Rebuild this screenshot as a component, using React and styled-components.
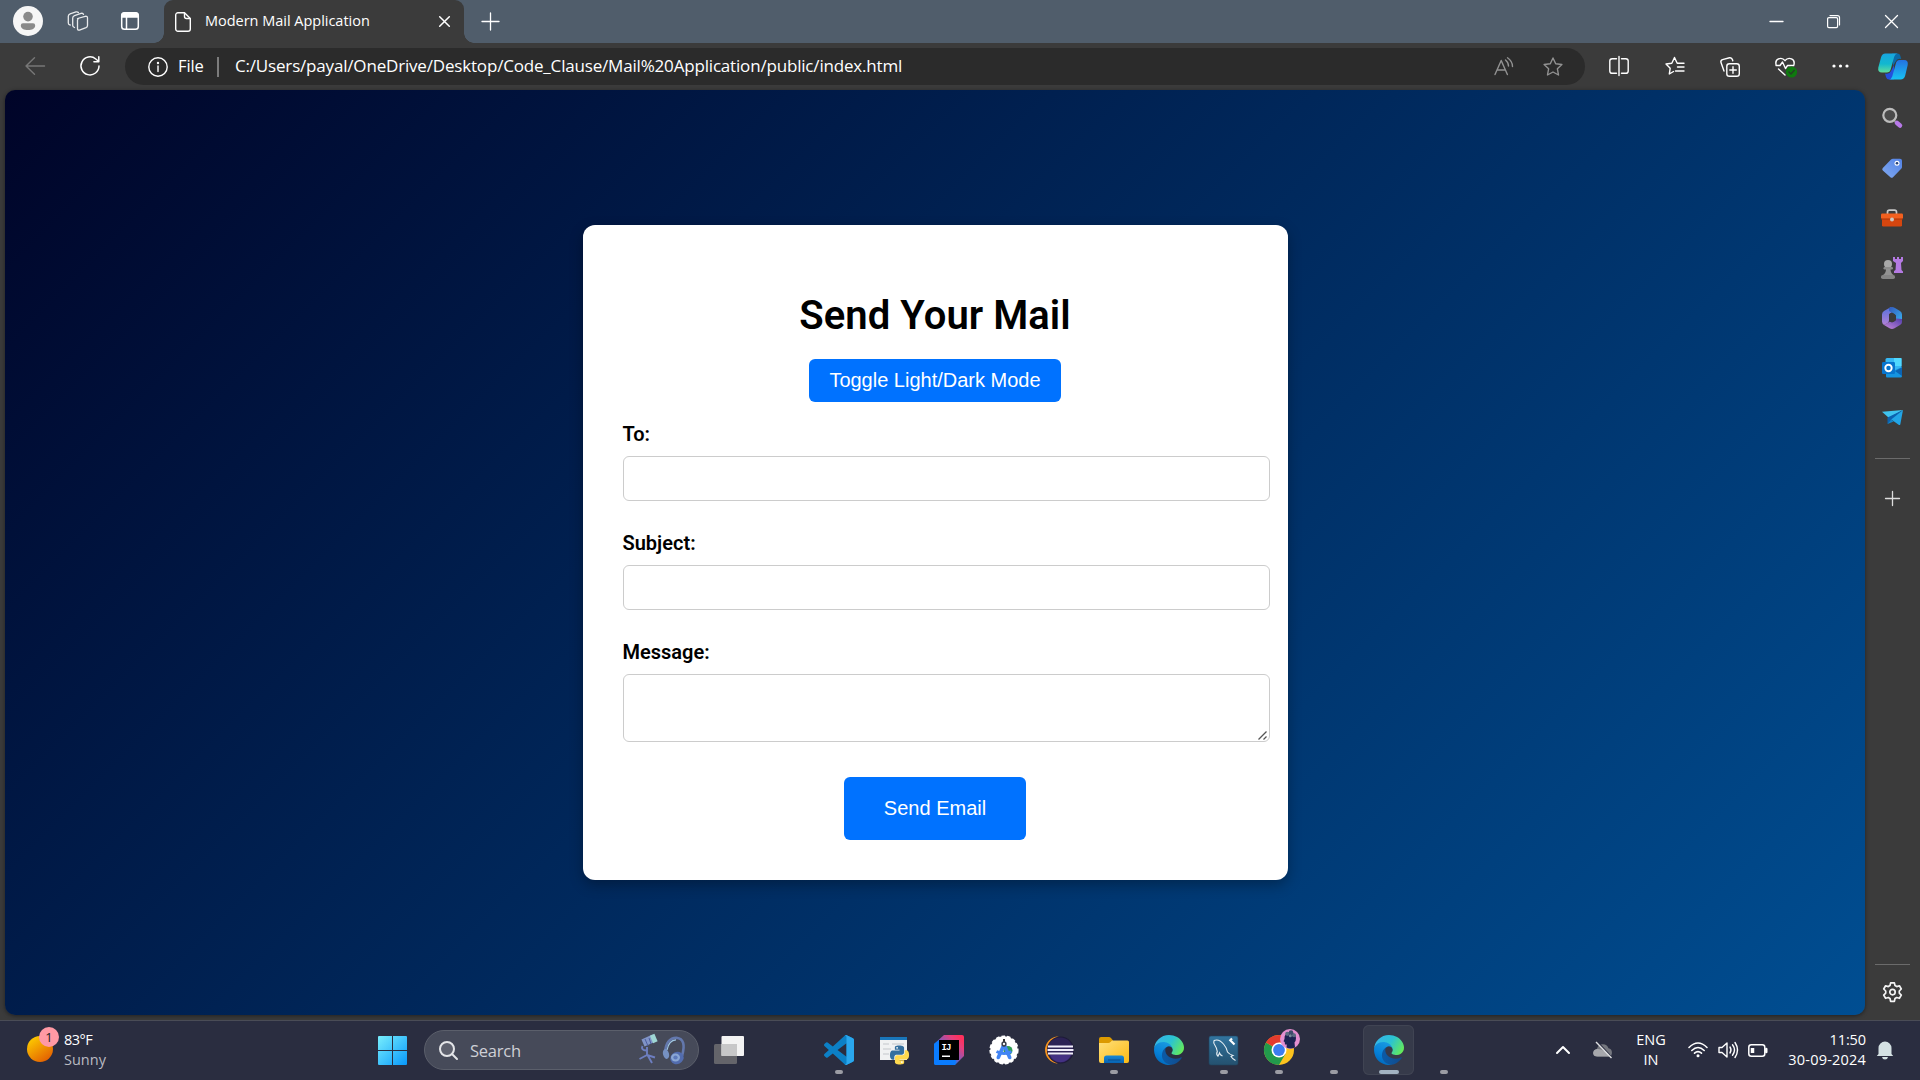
import React from 'react';
import styled, { createGlobalStyle } from 'styled-components';

const GlobalStyle = createGlobalStyle`
  * { box-sizing: border-box; }
  html, body { margin: 0; padding: 0; }
  body { background: #3b3b3b; overflow: hidden; }
  svg { display: block; flex: none; overflow: visible; }
`;

const uiFont = `'Open Sans', 'Noto Sans', sans-serif`;

const Desktop = styled.div`
  width: 1920px;
  height: 1080px;
  display: flex;
  flex-direction: column;
  background: #3b3b3b;
  font-family: ${uiFont};
  color: #fff;
`;

/* ---------- title bar ---------- */
const TitleBar = styled.header`
  height: 43px;
  flex: none;
  display: flex;
  background: #505d6b;
`;

const Cell = styled.div`
  width: ${(p) => p.$w}px;
  height: 100%;
  flex: none;
  display: flex;
  align-items: center;
  justify-content: center;
  padding-bottom: ${(p) => p.$lift || 0}px;
`;

const Tab = styled.div`
  position: relative;
  width: 300px;
  height: 43px;
  display: flex;
  align-items: center;
  padding: 0 14px 0 11px;
  border-radius: 9px 9px 0 0;
  background: #3b3b3b;
  &::before, &::after {
    content: '';
    position: absolute;
    bottom: 0;
    width: 10px;
    height: 10px;
  }
  &::before { left: -10px; background: radial-gradient(circle at 0 0, transparent 9.5px, #3b3b3b 10px); }
  &::after { right: -10px; background: radial-gradient(circle at 100% 0, transparent 9.5px, #3b3b3b 10px); }
`;

const TabTitle = styled.span`
  flex: 1;
  margin-left: 14px;
  padding-bottom: 2px;
  font-size: 14.5px;
  letter-spacing: ${(p) => p.$track}px;
  white-space: nowrap;
`;

const Spacer = styled.div`
  flex: 1;
`;

/* ---------- toolbar ---------- */
const Toolbar = styled.nav`
  height: 47px;
  flex: none;
  display: flex;
  align-items: center;
  padding-left: 7px;
`;

const AddressBar = styled.div`
  width: 1460px;
  height: 37px;
  margin-left: 8px;
  padding: 0 22px 0 23px;
  display: flex;
  align-items: center;
  border-radius: 19px;
  background: #2b2b2b;
`;

const Scheme = styled.span`
  width: 39px;
  margin-left: 10px;
  font-size: 16.5px;
  letter-spacing: -0.1px;
  padding-bottom: 2px;
`;

const Divider = styled.i`
  width: 2px;
  height: 20px;
  margin-right: 16px;
  background: #7c7c7c;
`;

const Url = styled.span`
  flex: 1;
  font-size: 17px;
  letter-spacing: -0.18px;
  white-space: nowrap;
  padding-bottom: 2px;
`;

const AddressActions = styled.div`
  display: flex;
  align-items: center;
  gap: 29px;
`;

/* ---------- body ---------- */
const Body = styled.div`
  height: 930px;
  flex: none;
  display: flex;
  padding: 0 0 5px 5px;
`;

const Page = styled.main`
  width: 1860px;
  height: 925px;
  display: flex;
  align-items: center;
  justify-content: center;
  border-radius: 10px;
  background: linear-gradient(135deg, #000428, #004e92);
  box-shadow: 0 1px 4px rgba(0, 0, 0, 0.45);
`;

const Card = styled.section`
  width: 705px;
  height: 655px;
  padding: 40px;
  display: flex;
  flex-direction: column;
  align-items: center;
  border-radius: 12px;
  background: #fff;
  color: #000;
  font-family: Roboto, sans-serif;
  box-shadow: 0 5px 14px rgba(0, 0, 0, 0.3);
`;

const Heading = styled.h1`
  margin: 27px 0 20px;
  font-size: 40px;
  line-height: 47px;
  font-weight: 600;
  letter-spacing: 0.06px;
`;

const ActionButton = styled.button`
  width: ${(p) => p.$w}px;
  height: ${(p) => p.$h}px;
  flex: none;
  padding: 0;
  border: 0;
  border-radius: 6px;
  background: #0072ff;
  color: #fff;
  font: 20px 'Liberation Sans', Arial, sans-serif;
`;

const Form = styled.form`
  width: 100%;
  display: flex;
  flex-direction: column;
  gap: 30px;
  margin: 20px 0 35px;
`;

const Field = styled.div`
  display: flex;
  flex-direction: column;
  gap: 10px;
`;

const Label = styled.label`
  font-size: 20px;
  line-height: 24px;
  font-weight: 600;
`;

const Input = styled.input`
  width: 647px;
  height: 45px;
  border: 1px solid #ccc;
  border-radius: 6px;
  background: #fff;
`;

const TextArea = styled.textarea`
  width: 647px;
  height: 68px;
  display: block;
  border: 1px solid #ccc;
  border-radius: 6px;
  background: #fff;
  resize: none;
`;

const MessageBox = styled.div`
  position: relative;
  height: 68px;
  width: 647px;
`;

const Grip = styled.svg`
  position: absolute;
  right: 3px;
  bottom: 2px;
`;

/* ---------- side rail ---------- */
const Rail = styled.aside`
  width: 55px;
  display: flex;
  flex-direction: column;
  align-items: center;
  padding: 3px 1px 0 0;
`;

const RailItem = styled.div`
  height: ${(p) => p.$h || 50}px;
  width: 100%;
  flex: none;
  display: flex;
  align-items: center;
  justify-content: center;
`;

const RailLine = styled.i`
  width: 35px;
  height: 1px;
  flex: none;
  background: #6b6b6b;
  margin: ${(p) => p.$m};
`;

/* ---------- taskbar ---------- */
const Taskbar = styled.footer`
  height: 60px;
  flex: none;
  display: flex;
  align-items: center;
  padding-bottom: 1px;
  background: #2a2d40;
  border-top: 1px solid #4a4c56;
`;

const Weather = styled.div`
  width: 378px;
  display: flex;
  align-items: center;
  padding-left: 27px;
`;

const WeatherIcon = styled.div`
  position: relative;
  width: 26px;
  height: 26px;
  margin-bottom: 2px;
  border-radius: 50%;
  background: linear-gradient(145deg, #fdcb00 10%, #e25d02 90%);
`;

const Badge = styled.span`
  position: absolute;
  left: 12px;
  top: -9px;
  width: 20px;
  height: 20px;
  border-radius: 50%;
  background: #ff99a4;
  color: #222;
  font-size: 13px;
  line-height: 20px;
  text-align: center;
`;

const TwoLines = styled.div`
  display: flex;
  flex-direction: column;
  font-size: 14.5px;
  line-height: 20px;
  text-align: ${(p) => p.$align || 'left'};
  width: ${(p) => p.$w}px;
  margin-left: ${(p) => p.$ml || 0}px;
  white-space: nowrap;
`;

const Line = styled.span`
  letter-spacing: ${(p) => p.$track || 0}px;
  color: ${(p) => (p.$dim ? '#b9bbc2' : '#fff')};
`;

const SearchBox = styled.div`
  width: 275px;
  height: 40px;
  margin: 0 15px 0 17px;
  padding: 0 12px 0 14px;
  display: flex;
  align-items: center;
  border: 1px solid #5b5f6b;
  border-radius: 20px;
  background: #464a59;
`;

const SearchText = styled.span`
  flex: 1;
  margin-left: 12px;
  font-size: 16.5px;
  letter-spacing: -0.25px;
  color: #ced0d6;
`;

const Apps = styled.div`
  display: flex;
  margin-left: 67px;
`;

const AppSlot = styled.div`
  position: relative;
  width: 51px;
  height: 50px;
  margin: 0 2px;
  display: flex;
  align-items: center;
  justify-content: center;
  border-radius: 6px;
  background: ${(p) => (p.$active ? '#363a4a' : 'transparent')};
  box-shadow: ${(p) => (p.$active ? 'inset 0 0 0 1px #404453' : 'none')};
`;

const Indicator = styled.i`
  position: absolute;
  bottom: 1px;
  left: 50%;
  width: ${(p) => (p.$active ? 20 : 8)}px;
  height: 4px;
  transform: translateX(-50%);
  border-radius: 2px;
  background: ${(p) => (p.$active ? '#a3b3c2' : '#9b9ca4')};
`;

const Raised = styled.div`
  padding: 0 0 6px 6px;
`;

/* ---------- drawings ---------- */
const Icon = ({ w = 20, h, box, sw = 1.4, color = '#fff', children }) => (
  <svg width={w} height={h || w} viewBox={box || `0 0 ${w} ${h || w}`} fill="none" stroke={color}
    strokeWidth={sw} strokeLinecap="round" strokeLinejoin="round">{children}</svg>
);

const Profile = () => (
  <svg width="30" height="30"><circle cx="15" cy="15" r="15" fill="#f6f6f6" />
    <circle cx="15" cy="10.600" r="4.800" fill="#8a8a8a" />
    <path d="M10 17.300h10a2.200 2.200 0 0 1 2.200 2.200c0 3.200-3.200 4.600-7.200 4.600s-7.200-1.400-7.200-4.600a2.200 2.200 0 0 1 2.200-2.200z" fill="#8a8a8a" /></svg>
);

const Workspaces = () => (
  <Icon w={22} h={20} sw={1.300} color="#e8eaec">
    <path d="M10.500 7.500l7.700-2.200q2.300-.4 2.300 1.700v7.500q0 1.600-1.500 2.200l-6.500 2.400q-2 .5-2-1.600V9q0-1.200 1.200-1.700" />
    <path d="M7.500 16.500q-1.800-.6-1.800-2V7q0-1.800 1.800-2.400L14 2.400q2-.5 2.500 1" />
    <path d="M3.200 14q-1.900-.4-1.900-2V5.300q0-1.800 1.800-2.400L9 .9q1.500-.4 2.400.6" />
  </Icon>
);

const TabActions = () => (
  <Icon w={18} sw={1.500}><rect x=".7" y=".7" width="16.600" height="16.600" rx="2.800" />
    <path d="M1 3.500Q1 1 3.500 1h11Q17 1 17 3.500V5H1z" fill="#fff" /><path d="M5.500 5v12" /></Icon>
);

const PageIcon = () => (
  <Icon w={16} h={20}><path d="M3 .7h6.500L15.300 6.500V17a2.300 2.300 0 0 1-2.300 2.300H3A2.300 2.300 0 0 1 .7 17V3A2.300 2.300 0 0 1 3 .7z" /><path d="M9.500 1v3.500a2 2 0 0 0 2 2H15" /></Icon>
);

const starPath = 'M10 1l2.700 5.700 6.200.8-4.500 4.300 1.100 6.200L10 15l-5.500 3 1.100-6.200L1.100 7.500l6.200-.8z';

const Copilot = () => (
  <svg width="30" height="27" viewBox="0 0 30 27">
    <defs>
      <linearGradient id="cpA" x1="0" y1="0" x2="0" y2="1"><stop offset="0" stopColor="#18a5e0" /><stop offset=".55" stopColor="#12b8cf" /><stop offset="1" stopColor="#62dd9b" /></linearGradient>
      <linearGradient id="cpB" x1="0" y1="0" x2="0" y2="1"><stop offset="0" stopColor="#2471e2" /><stop offset="1" stopColor="#18c2f2" /></linearGradient>
    </defs>
    <path d="M14 .5h5.500q2.300 0 2.800 2.200l.9 3.300q-4.200-.8-5.500 2.500L15 13z" fill="#0b6aa8" />
    <path d="M16 26.500h-5q-2.300 0-3-2.500l-1-3.500q4.500 1 6-2.500L16 12z" fill="#2450dc" />
    <path d="M7.500.5h12q-2.500.5-3.300 3.200L12.800 16q-.8 3.500-4 3.500H4Q-.5 19.500.3 14.500L3 4.500Q4 .5 7.500.5z" fill="url(#cpA)" />
    <path d="M21.500 7H26q4.500 0 3.700 5l-2.500 10.500q-1 4-4.700 4H11q2.500-.5 3.200-3l3.500-12.500Q18.500 7 21.500 7z" fill="url(#cpB)" />
  </svg>
);

const EdgeLogo = ({ id }) => (
  <svg width="30" height="30" viewBox="0 0 256 256">
    <defs>
      <linearGradient id={`${id}a`} x1=".2" y1=".5" x2="1" y2=".5"><stop offset="0" stopColor="#0c59a4" /><stop offset="1" stopColor="#114a8b" /></linearGradient>
      <linearGradient id={`${id}b`} x1=".7" y1="0" x2=".3" y2="1"><stop offset="0" stopColor="#1b9de2" /><stop offset=".6" stopColor="#0680d7" /><stop offset="1" stopColor="#0067ba" /></linearGradient>
      <linearGradient id={`${id}c`} x1="0" y1=".3" x2="1" y2=".7"><stop offset="0" stopColor="#35b5ea" /><stop offset=".5" stopColor="#2bc3d2" /><stop offset="1" stopColor="#66eb56" /></linearGradient>
    </defs>
    <path fill={`url(#${id}a)`} d="M231 190.500c-3.400 1.800-6.900 3.400-10.500 4.700a101.500 101.500 0 0 1-35.900 6.400c-47.300 0-88.500-32.500-88.500-74.300.1-11.400 6.400-21.900 16.400-27.300-42.800 1.800-53.800 46.400-53.800 72.500 0 74 68.100 81.400 82.800 81.400 7.900 0 19.800-2.300 27-4.600l1.300-.4a128.300 128.300 0 0 0 66.600-52.800 4 4 0 0 0-5.400-5.600z" />
    <path fill={`url(#${id}b)`} d="M105.700 241.500a79.200 79.200 0 0 1-22.700-21.300 80.700 80.700 0 0 1 29.500-120c3.200-1.500 8.500-4.100 15.600-4a32.400 32.400 0 0 1 25.700 13 31.900 31.900 0 0 1 6.300 18.700c0-.2 24.500-79.600-80-79.600-43.900 0-80 41.600-80 78.200a130.200 130.200 0 0 0 12.100 56 128 128 0 0 0 156.400 67 75.500 75.500 0 0 1-62.800-8z" />
    <path fill={`url(#${id}c)`} d="M152.300 148.900c-.8 1-3.300 2.500-3.300 5.600 0 2.600 1.700 5.100 4.700 7.300 14.400 10 41.500 8.700 41.600 8.700a59.600 59.600 0 0 0 30.300-8.400 61.400 61.400 0 0 0 30.400-52.900c.3-22.400-8-37.300-11.300-43.900C223.500 23.900 177.700 0 128 0A128 128 0 0 0 0 126.200c.5-36.500 36.800-66 80-66 3.500 0 23.500.3 42 10a72.600 72.600 0 0 1 30.900 29.300c6.100 10.600 7.200 24.100 7.200 29.500s-2.700 13.300-7.800 19.900z" />
  </svg>
);

const VSCode = () => (
  <svg width="30" height="30" viewBox="0 0 24 24">
    <path fill="#0c80c6" fillRule="evenodd" d="M23.150 2.587L18.210.21a1.494 1.494 0 0 0-1.705.29l-9.460 8.630-4.120-3.128a.999.999 0 0 0-1.276.057L.327 7.261A1 1 0 0 0 .326 8.740L3.899 12 .326 15.260a1 1 0 0 0 .001 1.479L1.650 17.940a.999.999 0 0 0 1.276.057l4.120-3.128 9.460 8.630a1.492 1.492 0 0 0 1.704.29l4.942-2.377A1.500 1.500 0 0 0 24 20.060V3.939a1.500 1.500 0 0 0-.85-1.352zm-5.146 14.861L10.826 12l7.178-5.448v10.896z" />
    <path fill="#2aa7ee" d="M18.210.21l4.940 2.377A1.500 1.500 0 0 1 24 3.940v16.120a1.500 1.500 0 0 1-.85 1.352l-4.940 2.377q-1 .4-1.750-.3 1.540.5 1.540-1.200V1.700q0-1.600-1.500-1.200.8-.7 1.710-.29z" />
  </svg>
);

const PythonApp = () => (
  <svg width="30" height="30" viewBox="0 0 30 30">
    <rect x="1" y="3" width="27" height="22" fill="#f0f1f2" /><rect x="1" y="2" width="27" height="3" fill="#1976ba" />
    <path d="M4 9h6M4 14h8M4 19h6M13 9h12" stroke="#c3c6cb" strokeWidth="1" />
    <g transform="translate(11 10.500) scale(.79)">
      <path fill="#346f9f" d="M14.250.18l.9.2.73.26.59.3.45.32.34.34.25.34.16.33.1.3.04.26.02.2-.01.13V8.500l-.05.63-.13.55-.21.46-.26.38-.3.31-.33.25-.35.19-.35.14-.33.1-.3.07-.26.04-.21.02H8.770l-.69.05-.59.14-.5.22-.41.27-.33.32-.27.35-.2.36-.15.37-.1.35-.07.32-.04.27-.02.21v3.060H3.170l-.21-.03-.28-.07-.32-.12-.35-.18-.36-.26-.36-.36-.35-.46-.32-.59-.28-.73-.21-.88-.14-1.050-.05-1.230.06-1.220.16-1.040.24-.87.32-.71.36-.57.4-.44.42-.33.42-.24.4-.16.36-.1.32-.05.24-.01h.16l.06.01h8.160v-.83H6.180l-.01-2.750-.02-.37.05-.34.11-.31.17-.28.25-.26.31-.23.38-.2.44-.18.51-.15.58-.12.64-.1.71-.06.77-.04.84-.02 1.270.05z" />
      <path fill="#ffd94f" d="M21.100 6.110l.28.06.32.12.35.18.36.27.36.35.35.47.32.59.28.73.21.88.14 1.040.05 1.230-.06 1.230-.16 1.040-.24.86-.32.71-.36.57-.4.45-.42.33-.42.24-.4.16-.36.09-.32.05-.24.02-.16-.01h-8.220v.82h5.840l.01 2.760.02.36-.05.34-.11.31-.17.29-.25.25-.31.24-.38.2-.44.17-.51.15-.58.13-.64.09-.71.07-.77.04-.84.01-1.270-.04-1.070-.14-.9-.2-.73-.25-.59-.3-.45-.33-.34-.34-.25-.34-.16-.33-.1-.3-.04-.25-.02-.2.01-.13v-5.340l.05-.64.13-.54.21-.46.26-.38.3-.32.33-.24.35-.2.35-.14.33-.1.3-.06.26-.04.21-.02.13-.01h5.840l.69-.05.59-.14.5-.21.41-.28.33-.32.27-.35.2-.36.15-.36.1-.35.07-.32.04-.28.02-.21V6.070h2.090l.14.01z" />
      <circle cx="9" cy="3" r="1.100" fill="#fff" /><circle cx="15" cy="21" r="1.100" fill="#fff" />
    </g>
  </svg>
);

const IntelliJ = () => (
  <svg width="30" height="30" viewBox="0 0 30 30">
    <defs><linearGradient id="ijA" x1="0" y1="1" x2="1" y2="0"><stop offset=".35" stopColor="#087cfa" /><stop offset=".52" stopColor="#8b58b4" /><stop offset=".75" stopColor="#e63e7c" /><stop offset=".9" stopColor="#fe315d" /></linearGradient></defs>
    <path d="M10 0h18q2 0 2 2v19l-9 9H2q-2 0-2-2V9z" fill="url(#ijA)" />
    <path d="M0 9l5-4v20h17l-1 5H2q-2 0-2-2z" fill="#0a7cff" />
    <rect x="5" y="5" width="20" height="20" fill="#000" />
    <text x="7.500" y="14.500" fontFamily="Liberation Mono, monospace" fontWeight="700" fontSize="9" fill="#fff" textLength="10">IJ</text>
    <rect x="8" y="20.500" width="8" height="1.500" fill="#fff" />
  </svg>
);

const AndroidStudio = () => (
  <svg width="30" height="30" viewBox="0 0 30 30">
    <circle cx="15" cy="15" r="13.700" fill="#fff" /><circle cx="15" cy="15" r="13.700" fill="none" stroke="#fff" strokeWidth="1.800" strokeDasharray="3.600 2" />
    <circle cx="19" cy="15.500" r="4.500" fill="#2f9c55" />
    <path d="M14.800 10L9.300 22.500M15.200 10l5.500 12.500" stroke="#4285f4" strokeWidth="3.600" strokeLinecap="round" />
    <path d="M7.500 16.500q7.500 4 15 0" stroke="#4285f4" strokeWidth="2.800" fill="none" />
    <path d="M15 4v3" stroke="#333" strokeWidth="2" /><circle cx="15" cy="9" r="1.900" fill="#fff" stroke="#3b3f4a" strokeWidth="1.500" />
  </svg>
);

const Eclipse = () => (
  <svg width="30" height="30" viewBox="0 0 30 30">
    <path d="M13 1.500A13.600 13.600 0 0 0 13 28.500L15 27V2z" fill="#f7941e" />
    <circle cx="16.500" cy="15" r="13.500" fill="#1e1b38" /><circle cx="16.300" cy="15" r="12.600" fill="#2c2255" />
    <path d="M6 20h21q-3 7-10.500 7.300Q9 27 6 20z" fill="#443183" />
    <path d="M4 11.500h25M3.500 15h26M4 18.500h25" stroke="#f1eefb" strokeWidth="1.900" />
  </svg>
);

const Folder = () => (
  <svg width="30" height="28" viewBox="0 0 30 28">
    <defs><linearGradient id="fdA" x1="0" y1="0" x2="1" y2="1"><stop offset="0" stopColor="#ffe07b" /><stop offset="1" stopColor="#fbba14" /></linearGradient>
      <linearGradient id="fdB" x1="0" y1="0" x2="0" y2="1"><stop offset="0" stopColor="#1788d6" /><stop offset="1" stopColor="#0763b3" /></linearGradient></defs>
    <path d="M0 3q0-2 2-2h8q1 0 2 1l2 2.500-3 4H0z" fill="#dc9a00" />
    <path d="M0 7h9.500q1 0 2-1L13 4.500h15.500q1.500 0 1.500 1.500v19q0 2-2 2H2q-2 0-2-2z" fill="url(#fdA)" />
    <path d="M5 27v-5q0-2.500 2.500-2.500h15Q25 19.500 25 22v5z" fill="url(#fdB)" /><path d="M9 24h12.500" stroke="#0a4c8d" />
  </svg>
);

const MySQL = () => (
  <svg width="29" height="29" viewBox="0 0 29 29">
    <defs><linearGradient id="myA" x1="0" y1="0" x2="0" y2="1"><stop offset="0" stopColor="#32749f" /><stop offset="1" stopColor="#24516f" /></linearGradient></defs>
    <rect width="29" height="29" rx="2" fill="url(#myA)" stroke="#20455f" strokeWidth=".6" />
    <path d="M5 4.500Q10 2.500 14.500 8q3 3.500 4 8 2 2.500 5.500 3.500l-2 1q1.500 2.500 4.500 4M5 4.500q-.8 2.500.8 4.500 2 3 2.500 6.500-1.500 3 .7 4.700l1.500-3.200Q11 19 13.500 20" fill="none" stroke="#e7eff4" strokeWidth="1.100" />
    <path d="M21.500 4.500l4 4M20.500 5l2.500-2.500" stroke="#fff" strokeWidth="2.200" />
  </svg>
);

const Chrome = () => (
  <svg width="36" height="36" viewBox="0 0 36 36">
    <circle cx="15" cy="21" r="15" fill="#fcc31e" />
    <path d="M2 13.500A15 15 0 0 0 15 36l6.500-11.200L15 21z" fill="#229a4c" />
    <path d="M2 13.500A15 15 0 0 1 28 13.500H15V21z" fill="#e33b2e" />
    <circle cx="15" cy="21" r="7.500" fill="#fff" /><circle cx="15" cy="21" r="5.900" fill="#3b7df0" />
    <circle cx="26" cy="10" r="10" fill="#e48fd0" />
    <path d="M20.500 10q-.3-6 5-6.500 6-.3 6.500 5.500 0 3-1.500 4.500l.5 5q-4.500 2-8.500 0l.3-3H21l-.3-2.500-1.200-.8z" fill="#1d2352" />
    <circle cx="23.300" cy="4.800" r="2.100" fill="#5b6c82" /><circle cx="27" cy="3.600" r="2.300" fill="#3d4b6a" />
    <circle cx="30" cy="6.300" r="2" fill="#5b6c82" /><circle cx="26.300" cy="6.800" r="1.500" fill="#7b8b99" />
  </svg>
);

const Mic = () => (
  <svg width="20" height="30" viewBox="0 0 20 30">
    <path d="M5 8L16 3" stroke="#8093c6" strokeWidth="7.500" /><path d="M13.500 4.500L18 2.500" stroke="#9fd7d4" strokeWidth="8" />
    <path d="M4.500 11q-2 4 4 4.500M9 12v9M9 20L1.500 24M9 20l8 2.500M9.500 20l4.500 8" stroke="#6d7ec0" strokeWidth="1.900" fill="none" />
    <path d="M7 4l3 7M11 3l2 6" stroke="#4c5da0" strokeWidth="1" />
  </svg>
);

const Headphones = () => (
  <svg width="24" height="29" viewBox="0 0 24 29">
    <path d="M3 17Q4 2 14.500 1.800 25 3 20 20" fill="none" stroke="#6378ad" strokeWidth="2.600" />
    <path d="M5 14Q7 4 14 3.800" fill="none" stroke="#a1c8e4" strokeWidth="1.200" />
    <ellipse cx="4" cy="18" rx="3" ry="5" fill="#7691c2" transform="rotate(-15 4 18)" />
    <ellipse cx="15" cy="22" rx="6.800" ry="6" fill="#526cae" transform="rotate(-25 15 22)" />
    <ellipse cx="13.500" cy="21.500" rx="4.500" ry="4" fill="#8ba8d4" /><ellipse cx="13.500" cy="21.500" rx="2.200" ry="2" fill="#5d7abb" />
  </svg>
);

const SideSearch = () => (
  <svg width="20" height="20" viewBox="0 0 20 20"><path d="M12.500 13l2.500 2.500" stroke="#8d8d8d" strokeWidth="2" />
    <circle cx="7.800" cy="7.300" r="6.500" fill="#4a4a4a" stroke="#bcbcbc" strokeWidth="2.200" />
    <path d="M15 15l3 2.500" stroke="#b779e8" strokeWidth="4.500" strokeLinecap="round" /></svg>
);
const Tag = () => (
  <svg width="20" height="20" viewBox="0 0 20 20">
    <defs><linearGradient id="tgA" x1="1" y1="0" x2="0" y2="1"><stop offset="0" stopColor="#5282e6" /><stop offset="1" stopColor="#82aaf0" /></linearGradient></defs>
    <path d="M11 .8h7q2 0 2 2V9q0 1-.8 1.800L11 19.300q-1.300 1-2.600 0L.8 12.500q-1.200-1.300 0-2.600L9 1.600q.8-.8 2-.8z" fill="url(#tgA)" />
    <circle cx="15" cy="5.300" r="2.500" fill="#fff" /><circle cx="15" cy="5.300" r="1.300" fill="#243f76" /></svg>
);
const Toolbox = () => (
  <svg width="22" height="18" viewBox="0 0 22 18">
    <path d="M6.500 5V3q0-1.800 2-1.800h5q2 0 2 1.800v2" fill="none" stroke="#c9c9c9" strokeWidth="1.700" />
    <rect x="1" y="8" width="20" height="9.500" rx="1.200" fill="#d6460f" /><rect y="4.500" width="22" height="5.500" rx="1.200" fill="#f2601f" />
    <path d="M0 10h22" stroke="#a93408" /><circle cx="11" cy="10.500" r="2" fill="#cfc6c0" /></svg>
);
const Games = () => (
  <svg width="22" height="22" viewBox="0 0 22 22">
    <path d="M12 0h2v2h2V0h2v2h2V0h2v4l-2 2 .5 7 1.500 1.500V16h-9v-2l1.500-1 .5-7-3-2z" fill="#b47ae2" />
    <circle cx="7" cy="7" r="4" fill="#a8a8a8" /><rect x="2.500" y="10" width="9.500" height="2.500" rx="1.200" fill="#8c8c8c" />
    <path d="M5 12h4.500q0 4 3 6H2q3-2 3-6z" fill="#929292" /><rect y="18" width="14" height="4" rx="1.800" fill="#858585" /></svg>
);
const M365 = () => (
  <svg width="20" height="22" viewBox="0 0 20 22">
    <defs><linearGradient id="msA" x1="0" y1="0" x2="1" y2="1"><stop offset="0" stopColor="#3359bc" /><stop offset="1" stopColor="#39b2ee" /></linearGradient>
      <linearGradient id="msB" x1="0" y1="0" x2="0" y2="1"><stop offset="0" stopColor="#5570dc" /><stop offset="1" stopColor="#b282d7" /></linearGradient>
      <linearGradient id="msC" x1="0" y1="1" x2="1" y2="0"><stop offset="0" stopColor="#c888dc" /><stop offset="1" stopColor="#513dab" /></linearGradient></defs>
    <path d="M9 0L2 4Q0 5 0 7.500v7Q0 16.500 2 18l3-1.500q2-1 2-3V7l5-3z" fill="url(#msB)" />
    <path d="M7 1q3-2 6 0l5 3q2 1 2 3.500V15l-6-3V9.500Q14 8 12.500 7L7 4z" fill="url(#msA)" />
    <path d="M20 12v3q0 2-2 3l-5.500 3.300Q10 22.600 7.500 21.300L2 18l6-3.500q2 1.300 4 0 2-1 2-3z" fill="url(#msC)" />
    <path d="M7 8.500q0-1 1-1.500l2-1.200L13 7.500q1 .6 1 1.800v3q0 1-1 1.600l-2 1.200q-1 .4-2 0L7 14z" fill="#3b3b3b" /></svg>
);
const Outlook = () => (
  <svg width="20" height="20" viewBox="0 0 20 20">
    <path d="M5 0h13q1.500 0 1.500 1.500V13H3.500V1.500Q3.500 0 5 0z" fill="#36b8f5" /><path d="M12 0h7.500v8H12z" fill="#50d9ff" />
    <path d="M5 19.500h13.500q1.500 0 1.500-1.500V9l-16 7v2.500q0 1 1 1z" fill="#1594e0" /><path d="M13 13l7 5V9.500z" fill="#0b64b4" />
    <rect y="4" width="13" height="12" rx="1.200" fill="#0875ce" /><circle cx="6.500" cy="10" r="3.200" fill="none" stroke="#fff" strokeWidth="1.900" /></svg>
);
const Plane = () => (
  <svg width="21" height="16" viewBox="0 0 21 16">
    <path d="M0 1.800L21 0l-14 8z" fill="#3fc4ef" /><path d="M21 0L5.500 7.500V14L9 11z" fill="#0b62af" />
    <path d="M21 0L9.200 9.500 17 15q1 .4 1.300-.8z" fill="#22a5e6" /><path d="M5.500 14l3.700-4.500 2.500 2z" fill="#1285cb" /></svg>
);

const Gear = () => (
  <Icon w={21} sw={1.700} color="#f4f4f4">
    <path d="M8.600.9h3.800l.6 2.700 1.700 1 2.700-.8 1.900 3.200-2 2v2.100l2 2-1.900 3.200-2.700-.8-1.700 1-.6 2.800H8.600L8 16.500l-1.700-1-2.700.8-1.900-3.200 2-2V9l-2-2 1.900-3.200 2.700.8 1.700-1z" />
    <circle cx="10.500" cy="10.100" r="2.700" />
  </Icon>
);

const CloudOff = () => (
  <svg width="20" height="17" viewBox="0 0 20 17">
    <path d="M5 14.500a4 4 0 0 1-1-7.800 6 6 0 0 1 11.500-.5A4.300 4.300 0 0 1 16 14.500z" fill="#75777f" />
    <path d="M0 11q.3-3.500 4-4 4-.3 7 2l7.500 4q-1 1.500-3 1.500H4Q.3 14.500 0 11z" fill="#a6a7ac" /><path d="M4.500 0l14 15" stroke="#2a2d40" strokeWidth="1.600" /><path d="M3 0l15.500 16" stroke="#dedfe2" strokeWidth="1.400" />
  </svg>
);

const Start = () => (
  <svg width="29" height="29" viewBox="0 0 29 29">
    <defs><linearGradient id="stA" gradientUnits="userSpaceOnUse" x1="0" y1="0" x2="29" y2="29"><stop offset="0" stopColor="#78eefc" /><stop offset="1" stopColor="#0898fb" /></linearGradient></defs>
    <path d="M1 0h13v14H0V1q0-1 1-1zM15 0h13q1 0 1 1v13H15zM0 15h14v14H1q-1 0-1-1zM15 15h14v13q0 1-1 1H15z" fill="url(#stA)" />
  </svg>
);

const apps = [
  { key: 'code', icon: <VSCode />, run: true },
  { key: 'python', icon: <PythonApp /> },
  { key: 'idea', icon: <IntelliJ /> },
  { key: 'studio', icon: <AndroidStudio /> },
  { key: 'eclipse', icon: <Eclipse /> },
  { key: 'files', icon: <Folder />, run: true },
  { key: 'edge', icon: <EdgeLogo id="e1" /> },
  { key: 'mysql', icon: <MySQL />, run: true },
  { key: 'chrome', icon: <Raised><Chrome /></Raised>, run: true },
  { key: 'blank1', run: true },
  { key: 'edgeActive', icon: <EdgeLogo id="e2" />, run: true, active: true },
  { key: 'blank2', run: true },
];

export default function App() {
  return (
    <Desktop>
      <GlobalStyle />
      <TitleBar>
        <Cell $w={56} $lift={1}><Profile /></Cell>
        <Cell $w={43} $lift={1}><Workspaces /></Cell>
        <Cell $w={62} $lift={1}><TabActions /></Cell>
        <Cell $w={3} />
        <Tab>
          <PageIcon />
          <TabTitle $track={-0.02}>Modern Mail Application</TabTitle>
          <Icon w={11} sw={1.500}><path d="M.7.7l9.600 9.600M10.300.7L.7 10.300" /></Icon>
        </Tab>
        <Cell $w={53} $lift={1}><Icon w={17} sw={1.300}><path d="M8.500 0v17M0 8.500h17" /></Icon></Cell>
        <Spacer />
        <Cell $w={57}><Icon w={13} sw={1.300}><path d="M0 6.500h13" /></Icon></Cell>
        <Cell $w={57}><Icon w={13} sw={1.200}><rect x=".6" y="2.600" width="10" height="10" rx="1.300" /><path d="M3 .6h7.500q2 0 2 2V10" /></Icon></Cell>
        <Cell $w={58}><Icon w={13} sw={1.300}><path d="M.5.5l12 12M12.500.5l-12 12" /></Icon></Cell>
      </TitleBar>

      <Toolbar>
        <Cell $w={55} $lift={1}><Icon w={20} h={18} color="#777"><path d="M19.500 9H1M9.500.7L1 9l8.500 8.300" /></Icon></Cell>
        <Cell $w={55} $lift={1}><Icon w={20} sw={1.500}><path d="M19 10a9 9 0 1 1-3.200-7L18.800 5.500M18.800.8v4.900h-4.900" /></Icon></Cell>
        <AddressBar>
          <Icon w={20}><circle cx="10" cy="10" r="9.200" /><path d="M10 9v5.500" /><circle cx="10" cy="6" r=".5" fill="#fff" /></Icon>
          <Scheme>File</Scheme>
          <Divider />
          <Url>C:/Users/payal/OneDrive/Desktop/Code_Clause/Mail%20Application/public/index.html</Url>
          <AddressActions>
            <Icon w={20} color="#929292">
              <path d="M1 17.500L7.200 3.500 13.400 17.500M3.200 13h8" />
              <path d="M11.500 3q3 2.500 3 6M13.500.8q5 3.500 5 8.700" />
            </Icon>
            <Icon w={20} color="#929292"><path d={starPath} /></Icon>
          </AddressActions>
        </AddressBar>
        <Cell $w={68} $lift={1}><Icon w={20}><path d="M7.500 17.300H3.200a2.400 2.400 0 0 1-2.400-2.400V5.100a2.400 2.400 0 0 1 2.400-2.400h4.300M12.500 2.700h4.300a2.400 2.400 0 0 1 2.400 2.400v9.800a2.400 2.400 0 0 1-2.400 2.400h-4.300M10 .5v19" /></Icon></Cell>
        <Cell $w={43} $lift={1}><Icon w={20}><path d="M8.500 15.500L4.300 18l.9-5.800L1 8l5.800-.8L9.500 1.500l2.700 5.700H19M12.500 11H19M10.500 15H19" /></Icon></Cell>
        <Cell $w={68}><Icon w={20}><rect x="6.800" y="6.800" width="12.500" height="12.500" rx="2.600" /><path d="M13 9.800v6.500M9.800 13h6.500M4 14l-3-8.500Q.3 3.400 2.500 2.600L9.500.8q2.300-.4 3 2l.3 1" /></Icon></Cell>
        <Cell $w={43}><Icon w={22} h={20}><path d="M1.300 8.500Q-.3 3.500 3.500 1.800 7.500.3 10 3.700 12.500.3 16.500 1.800q3.800 1.700 2.200 6.700M1 8.500h4L7.500 5l3 6.500 2-3h6M3.500 12l6.500 6" /><circle cx="16.500" cy="15" r="5.600" fill="#0e7a0e" stroke="none" /><path d="M14 15l2 2 3.300-3.800" stroke="#243f24" /></Icon></Cell>
        <Cell $w={66} $lift={1}><svg width="17" height="4"><circle cx="2" cy="2" r="1.600" fill="#fff" /><circle cx="8.500" cy="2" r="1.600" fill="#fff" /><circle cx="15" cy="2" r="1.600" fill="#fff" /></svg></Cell>
        <Cell $w={40} $lift={1}><Copilot /></Cell>
      </Toolbar>

      <Body>
        <Page>
          <Card>
            <Heading>Send Your Mail</Heading>
            <ActionButton $w={252} $h={43}>Toggle Light/Dark Mode</ActionButton>
            <Form>
              <Field><Label>To:</Label><Input /></Field>
              <Field><Label>Subject:</Label><Input /></Field>
              <Field>
                <Label>Message:</Label>
                <MessageBox>
                  <TextArea />
                  <Grip width="9" height="9" viewBox="0 0 9 9" stroke="#555" strokeWidth="1.300"><path d="M.5 8.500l8-8M5.500 8.500l3-3" /></Grip>
                </MessageBox>
              </Field>
            </Form>
            <ActionButton $w={182} $h={63}>Send Email</ActionButton>
          </Card>
        </Page>
        <Rail>
          <RailItem><SideSearch /></RailItem>
          <RailItem><Tag /></RailItem>
          <RailItem><Toolbox /></RailItem>
          <RailItem><Games /></RailItem>
          <RailItem><M365 /></RailItem>
          <RailItem><Outlook /></RailItem>
          <RailItem><Plane /></RailItem>
          <RailLine $m="15px 0 14px" />
          <RailItem><Icon w={15} sw={1.300} color="#ddd"><path d="M7.500.5v14M.5 7.500h14" /></Icon></RailItem>
          <Spacer />
          <RailLine $m="0 0 5px" />
          <RailItem $h={45}><Gear /></RailItem>
        </Rail>
      </Body>

      <Taskbar>
        <Weather>
          <WeatherIcon><Badge>1</Badge></WeatherIcon>
          <TwoLines $w={60} $ml={11}><Line $track={-0.5}>83°F</Line><Line $dim>Sunny</Line></TwoLines>
        </Weather>
        <Start />
        <SearchBox>
          <Icon w={19} sw={2} color="#e4e5e8"><circle cx="8" cy="8" r="7" fill="#5e616e" /><path d="M13 13l5 5" /></Icon>
          <SearchText>Search</SearchText>
          <Mic />
          <Cell $w={4} />
          <Headphones />
        </SearchBox>
        <svg width="30" height="28"><rect y="8" width="23" height="20" rx="1.500" fill="#64646a" /><rect x="7.500" width="22.500" height="20" rx="1" fill="#f3f3f3" /><rect x="7.500" y="8" width="15.500" height="12" fill="#c7c7c8" /></svg>
        <Apps>
          {apps.map((a) => (
            <AppSlot key={a.key} $active={a.active}>
              {a.icon}
              {a.run && <Indicator $active={a.active} />}
            </AppSlot>
          ))}
        </Apps>
        <Spacer />
        <Cell $w={40}><Icon w={14} h={8} sw={2}><path d="M1 7l6-6 6 6" /></Icon></Cell>
        <Cell $w={40}><CloudOff /></Cell>
        <TwoLines $w={40} $ml={8} $align="center"><Line>ENG</Line><Line>IN</Line></TwoLines>
        <Cell $w={54}><svg width="20" height="16" viewBox="0 0 20 16" fill="none" stroke="#fff" strokeWidth="1.600" strokeLinecap="round">
          <path d="M1 5.500q9-9 18 0M3.800 8.500q6.200-6 12.400 0M6.500 11.200q3.500-3 7 0" /><circle cx="10" cy="13.700" r="1.500" fill="#fff" stroke="none" /></svg></Cell>
        <Cell $w={6}><Icon w={20} h={18}><path d="M1 6.500h3L9 2v14l-5-4.500H1zM12 6q2 3 0 6M14.500 3.800q4 5.200 0 10.400M17 1.500q5 7.500 0 15" /></Icon></Cell>
        <Cell $w={54}><Icon w={20} h={13} sw={1.500}><rect x=".8" y=".8" width="16" height="11.400" rx="2.500" /><path d="M18.300 5v3" strokeWidth="2.400" /><path d="M4.500 4v5" strokeWidth="3.500" strokeLinecap="butt" /></Icon></Cell>
        <TwoLines $w={81} $align="right"><Line $track={-0.1}>11:50</Line><Line $track={0.2}>30-09-2024</Line></TwoLines>
        <Cell $w={38}><svg width="18" height="20" viewBox="0 0 18 20"><path d="M2.500 14V8a6.500 6.500 0 0 1 13 0v6l1.700 2H.8z" fill="#d4e1e3" /><path d="M6 17h6q-.5 2.500-3 2.500T6 17z" fill="#d4e1e3" /></svg></Cell>
        <Cell $w={16} />
      </Taskbar>
    </Desktop>
  );
}
